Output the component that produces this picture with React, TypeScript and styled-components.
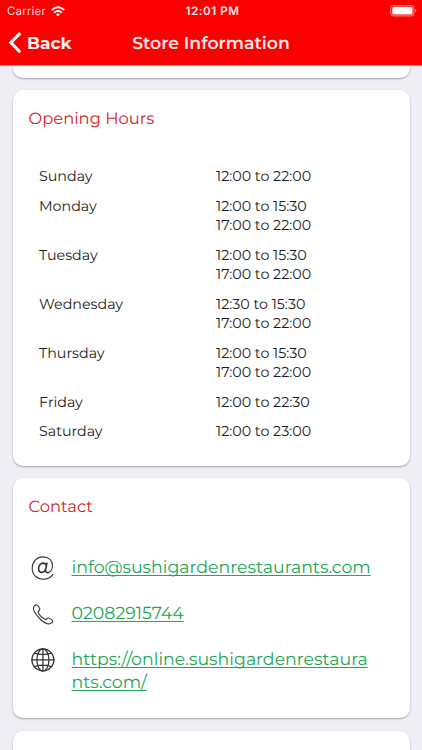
import React from "react";
import styled, { createGlobalStyle } from "styled-components";

const GlobalStyle = createGlobalStyle`
  *, *::before, *::after { box-sizing: border-box; }
  body { margin: 0; background: #efeef4; }
`;

const Screen = styled.div`
  width: 422px;
  height: 750px;
  overflow: hidden;
  display: flex;
  flex-direction: column;
  background: #efeef4;
  color: #1c1c1c;
  font-family: Montserrat, Inter, "Open Sans", sans-serif;
  text-rendering: geometricPrecision;
`;

const Header = styled.header`
  flex: none;
  height: 66px;
  background: #fa0000;
  border-bottom: 1px solid #fb7c7e;
  color: #fff;
`;

const StatusBar = styled.div`
  display: grid;
  grid-template-columns: 1fr auto 1fr;
  align-items: center;
  height: 22px;
  padding: 0 4px 0 7px;
  font-family: Inter, sans-serif;
  font-size: 11.5px;
  line-height: 22px;
`;

const Carrier = styled.div`
  display: flex;
  align-items: center;
  gap: 5px;
  color: #ffdede;
  letter-spacing: 0.18px;
`;

const Clock = styled.div`
  font-weight: 600;
  font-size: 11.6px;
  letter-spacing: 0.55px;
  color: #ffeaea;
`;

const BatterySlot = styled.div`
  display: flex;
  justify-content: flex-end;
`;

const NavBar = styled.nav`
  display: grid;
  grid-template-columns: 1fr auto 1fr;
  align-items: center;
  height: 42px;
  padding: 0 8px;
  font-size: 17px;
  line-height: 24px;
`;

const BackButton = styled.button`
  display: flex;
  align-items: center;
  gap: 5px;
  padding: 0;
  border: 0;
  background: none;
  color: #fff0f0;
  font: inherit;
  font-weight: 700;
`;

const Title = styled.h1`
  margin: 0;
  padding-top: 1px;
  font-size: 17.3px;
  font-weight: 600;
  color: #ffe8e8;
`;

const Content = styled.main`
  flex: 1;
  min-height: 0;
  display: flex;
  flex-direction: column;
  gap: 12.5px;
  padding: 0 12.5px;
  overflow: hidden;
`;

const Card = styled.section<{ $height: number; $clipped?: boolean }>`
  flex: none;
  height: ${(p) => p.$height}px;
  padding: 0 16px;
  border-radius: ${(p) => (p.$clipped ? "0 0 10px 10px" : "10px")};
  background: #fff;
  box-shadow: 0 1px 2px rgba(0, 0, 0, 0.32);
`;

const CardTitle = styled.h2`
  margin: 0;
  padding-top: 16.5px;
  font-size: 16.35px;
  line-height: 24px;
  font-weight: 400;
  color: #d6201f;
`;

const Hours = styled.dl`
  display: flex;
  flex-direction: column;
  gap: 10px;
  margin: 36.5px 0 0;
  padding: 0 10.5px;
`;

const HoursRow = styled.div`
  display: grid;
  grid-template-columns: 177px 1fr;
  font-size: 14.25px;
  line-height: 19.5px;
`;

const Day = styled.dt`
  margin: 0;
`;

const Times = styled.dd`
  margin: 0;
`;

const Contacts = styled.div`
  display: flex;
  flex-direction: column;
  gap: 22px;
  margin-top: 37.5px;
  padding-left: 2px;
`;

const ContactRow = styled.div`
  display: grid;
  grid-template-columns: 24px 1fr;
  column-gap: 17px;
  align-items: start;
`;

const Link = styled.a`
  display: block;
  padding-top: 1px;
  font-size: 17.38px;
  line-height: 22.5px;
  color: #22a653;
  text-decoration: underline;
  text-decoration-thickness: 1px;
  text-underline-offset: 2px;
  text-decoration-skip-ink: none;
`;

const Glyph = styled.svg`
  display: block;
  fill: none;
  stroke: #333;
  stroke-width: 1.25;
  stroke-linecap: round;
  stroke-linejoin: round;
`;

const WifiIcon = () => (
  <svg width="14" height="11" viewBox="0 0 14 11" fill="none" stroke="#fff" strokeWidth="1.9">
    <path d="M0.8 4Q7-1.3 13.2 4M3 6.6Q7 3.2 11 6.6" />
    <path d="M7 10.3L4.9 8.2Q7 6.7 9.1 8.2Z" fill="#fff" stroke="none" />
  </svg>
);

const BatteryIcon = () => (
  <svg width="28" height="12" viewBox="0 0 28 12">
    <rect x="0.8" y="0.3" width="23.2" height="10.6" rx="2.5" fill="none" stroke="#ff9090" />
    <rect x="2.3" y="1.8" width="20.2" height="7.6" rx="1.2" fill="#fff" />
    <path d="M25.2 3.8v3.6q1.3-.5 1.3-1.8t-1.3-1.8z" fill="#ff8080" />
  </svg>
);

const ChevronIcon = () => (
  <svg width="14" height="22" viewBox="0 0 14 22" fill="none" stroke="#fff" strokeWidth="3">
    <path d="M12.2 1.1L2.8 10.6l9.4 9.6" />
  </svg>
);

const AtIcon = () => (
  <Glyph width="24" height="24" viewBox="0 0 24 24">
    <path strokeWidth="1.1" d="M22 18.4C19.8 21.6 16.4 23.2 12.4 23.2 5.9 23.2 1.2 18.8 1.2 12.3S5.8.9 12 .9c5.9 0 9.5 3.6 9.5 8.5 0 4.1-2.2 7-4.4 7.2" />
    <path strokeWidth="1.6" d="M15.9 7.2L14.6 14.2C14.3 15.8 15 16.8 17.1 16.6M15.3 9.6C15 8 13.8 7.1 12.2 7.1c-2.7 0-4.6 2.7-4.6 5.5 0 2.3 1.1 3.8 3 3.8 2.3 0 3.7-1.8 4.2-4" />
  </Glyph>
);

const PhoneIcon = () => (
  <Glyph width="24" height="24" viewBox="0 0 24 24">
    <path strokeWidth="1.1" d="M3.4 3.8C4.8 2.4 6.4 2.7 7.4 4.3l1 1.7c.7 1.2.4 2-.5 2.8-.8.6-.9 1.3-.5 2.1 1.4 2.8 3.5 4.9 6.4 6.4.8.4 1.4.3 1.9-.4.8-1 1.8-1.2 2.9-.5l1.9 1.2c1.4.9 1.5 2.1.4 3.1-2.7 2.6-6.7 1.2-11.8-3.7C3.8 11.9.9 6.4 3.4 3.8Z" />
  </Glyph>
);

const GlobeIcon = () => (
  <Glyph width="24" height="24" viewBox="0 0 24 24">
    <circle cx="11.9" cy="11.9" r="11" />
    <ellipse cx="11.9" cy="11.9" rx="6" ry="11" />
    <path d="M11.9.9v22M.9 11.9h22M3.6 5.2Q11.9 8.1 20.2 5.2M3.6 18.6Q11.9 15.7 20.2 18.6" />
  </Glyph>
);

const openingHours = [
  { day: "Sunday", times: ["12:00 to 22:00"] },
  { day: "Monday", times: ["12:00 to 15:30", "17:00 to 22:00"] },
  { day: "Tuesday", times: ["12:00 to 15:30", "17:00 to 22:00"] },
  { day: "Wednesday", times: ["12:30 to 15:30", "17:00 to 22:00"] },
  { day: "Thursday", times: ["12:00 to 15:30", "17:00 to 22:00"] },
  { day: "Friday", times: ["12:00 to 22:30"] },
  { day: "Saturday", times: ["12:00 to 23:00"] },
];

export default function App() {
  return (
    <>
      <GlobalStyle />
      <Screen>
        <Header>
          <StatusBar>
            <Carrier>Carrier <WifiIcon /></Carrier>
            <Clock>12:01 PM</Clock>
            <BatterySlot><BatteryIcon /></BatterySlot>
          </StatusBar>
          <NavBar>
            <BackButton><ChevronIcon />Back</BackButton>
            <Title>Store Information</Title>
          </NavBar>
        </Header>
        <Content>
          <Card $height={11.5} $clipped />
          <Card $height={375.5}>
            <CardTitle>Opening Hours</CardTitle>
            <Hours>
              {openingHours.map(({ day, times }) => (
                <HoursRow key={day}>
                  <Day>{day}</Day>
                  <Times>{times.map((time) => <div key={time}>{time}</div>)}</Times>
                </HoursRow>
              ))}
            </Hours>
          </Card>
          <Card $height={240}>
            <CardTitle>Contact</CardTitle>
            <Contacts>
              <ContactRow>
                <AtIcon />
                <Link href="mailto:info@sushigardenrestaurants.com">info@sushigardenrestaurants.com</Link>
              </ContactRow>
              <ContactRow>
                <PhoneIcon />
                <Link href="tel:02082915744">02082915744</Link>
              </ContactRow>
              <ContactRow>
                <GlobeIcon />
                <Link href="https://online.sushigardenrestaurants.com/">
                  https://online.sushigardenrestaura<br />nts.com/
                </Link>
              </ContactRow>
            </Contacts>
          </Card>
          <Card $height={60} />
        </Content>
      </Screen>
    </>
  );
}
